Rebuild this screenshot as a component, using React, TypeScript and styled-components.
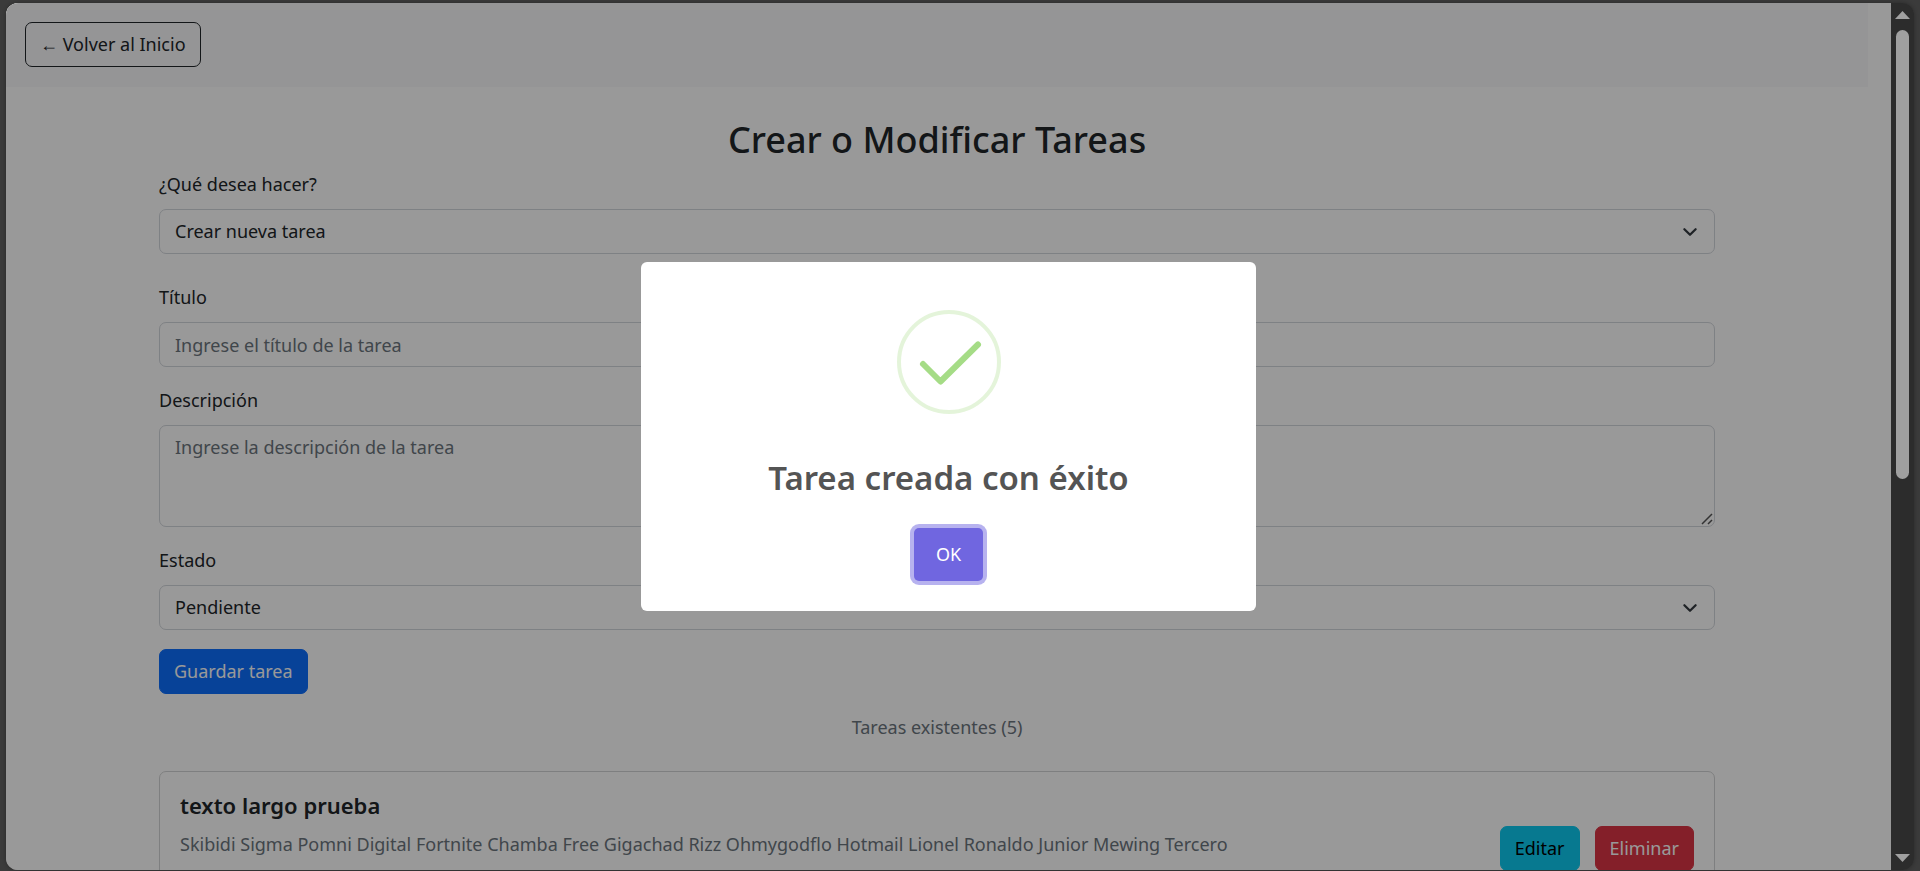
import React, { useState } from "react";
import styled, { createGlobalStyle, css } from "styled-components";

const GlobalStyle = createGlobalStyle`
  *, *::before, *::after { box-sizing: border-box; }
  body {
    margin: 0;
    background: #3b3b3b;
    color: #212529;
    font-family: "Noto Sans", "Segoe UI", sans-serif;
    font-size: 18px;
    line-height: 29px;
  }
`;

const Shell = styled.div`
  display: flex;
  height: 100vh;
  padding: 3px 6px 1px;
`;

const Frame = styled.div`
  display: flex;
  flex: 1;
  min-width: 0;
  border-radius: 12px;
  overflow: hidden;
  box-shadow: 0 0 4px rgba(0, 0, 0, 0.3);
`;

const Viewport = styled.div`
  position: relative;
  flex: 1;
  min-width: 0;
  overflow: hidden;
  background: #fff;
`;

const Page = styled.div`
  padding-right: 23px;
`;

const TopBar = styled.header`
  padding: 19px 19px 20px;
  background: #f8f9fa;
`;

const Container = styled.main`
  max-width: 1584px;
  margin: 0 auto;
  padding: 29px 14px;
`;

type Tone = "outline" | "primary" | "info" | "danger";

const tones = {
  outline: css`
    background: transparent;
    border-color: #212529;
    color: #212529;
  `,
  primary: css`
    background: #0d6efd;
    border-color: #0d6efd;
    color: #fff;
  `,
  info: css`
    background: #0dcaf0;
    border-color: #0dcaf0;
    color: #000;
  `,
  danger: css`
    background: #dc3545;
    border-color: #dc3545;
    color: #fff;
  `,
};

const Button = styled.button<{ $tone: Tone }>`
  padding: 7px 14px;
  border: 1px solid;
  border-radius: 7px;
  font: inherit;
  white-space: nowrap;
  cursor: pointer;
  ${({ $tone }) => tones[$tone]}
`;

const Heading = styled.h1`
  margin: 0 0 6px;
  font-size: 36px;
  font-weight: 500;
  line-height: 48px;
  text-align: center;
`;

const Field = styled.div<{ $spaced?: boolean }>`
  display: flex;
  flex-direction: column;
  gap: 10px;
  margin-bottom: ${({ $spaced }) => ($spaced ? 29 : 19)}px;
`;

const controlStyle = css`
  display: block;
  width: 100%;
  padding: 7px 15px;
  border: 1px solid #d3d7dc;
  border-radius: 7px;
  background: #fff;
  color: #212529;
  font: inherit;

  &::placeholder {
    color: #6c757d;
    opacity: 1;
  }
`;

const TextInput = styled.input`
  ${controlStyle}
  height: 45px;
`;

const TextArea = styled.textarea`
  ${controlStyle}
  height: 102px;
  resize: vertical;

  &::-webkit-resizer {
    background: transparent;
  }
`;

const ControlWrap = styled.div`
  position: relative;
`;

const SelectBox = styled.select`
  ${controlStyle}
  height: 45px;
  appearance: none;
`;

const Chevron = styled.svg`
  position: absolute;
  top: 50%;
  right: 16px;
  width: 18px;
  height: 18px;
  margin-top: -9px;
  pointer-events: none;
`;

const Grip = styled.svg`
  position: absolute;
  right: 2px;
  bottom: 2px;
  width: 12px;
  height: 12px;
  pointer-events: none;
`;

const ListCaption = styled.p`
  margin: 19px 0 29px;
  color: #6c757d;
  text-align: center;
`;

const TaskCard = styled.article`
  display: flex;
  align-items: center;
  justify-content: space-between;
  gap: 24px;
  min-height: 154px;
  padding: 19px 20px;
  border: 1px solid #d3d4d5;
  border-radius: 7px;
`;

const TaskText = styled.div`
  align-self: flex-start;
`;

const TaskTitle = styled.h2`
  margin: 0 0 10px;
  font-size: 22px;
  font-weight: 600;
  line-height: 29px;
`;

const TaskDescription = styled.p`
  margin: 0;
  color: #6c757d;
`;

const TaskActions = styled.div`
  display: flex;
  gap: 15px;
`;

const Backdrop = styled.div`
  position: absolute;
  inset: 0;
  display: grid;
  place-items: center;
  background: rgba(0, 0, 0, 0.4);
`;

const Dialog = styled.div`
  display: flex;
  flex-direction: column;
  align-items: center;
  width: 615px;
  max-width: 100%;
  padding: 48px 24px 30px;
  border-radius: 6px;
  background: #fff;
`;

const SuccessIcon = styled.svg`
  width: 104px;
  height: 104px;
`;

const DialogTitle = styled.h2`
  margin: 39px 0 25px;
  color: #545454;
  font-size: 33px;
  font-weight: 600;
  line-height: 50px;
`;

const ConfirmButton = styled.button`
  padding: 12px 22px;
  border: 0;
  border-radius: 5px;
  background: #7066e0;
  box-shadow: 0 0 0 4px rgba(112, 102, 224, 0.5);
  color: #fff;
  font: inherit;
  cursor: pointer;
`;

const ScrollTrack = styled.div`
  display: flex;
  flex-direction: column;
  align-items: center;
  width: 23px;
  padding: 8px 0;
  background: #2c2c2c;
`;

const ScrollArea = styled.div`
  flex: 1;
  margin: 11px 0 8px;
`;

const ScrollThumb = styled.div`
  width: 13px;
  height: 55%;
  border-radius: 7px;
  background: #a0a0a0;
`;

const Arrow = styled.svg`
  display: block;
  width: 15px;
  height: 8px;
`;

function Select({ id, options }: { id: string; options: string[] }) {
  return (
    <ControlWrap>
      <SelectBox id={id}>
        {options.map((option) => (
          <option key={option}>{option}</option>
        ))}
      </SelectBox>
      <Chevron viewBox="0 0 16 16" aria-hidden="true">
        <path d="m3 5.5 5 5 5-5" fill="none" stroke="#343a40" strokeWidth="2" strokeLinecap="round" strokeLinejoin="round" />
      </Chevron>
    </ControlWrap>
  );
}

export default function App() {
  const [open, setOpen] = useState(true);

  return (
    <>
      <GlobalStyle />
      <Shell>
        <Frame>
          <Viewport>
            <Page>
              <TopBar>
                <Button type="button" $tone="outline">← Volver al Inicio</Button>
              </TopBar>
              <Container>
                <Heading>Crear o Modificar Tareas</Heading>
                <form onSubmit={(event) => event.preventDefault()}>
                  <Field $spaced>
                    <label htmlFor="accion">¿Qué desea hacer?</label>
                    <Select id="accion" options={["Crear nueva tarea"]} />
                  </Field>
                  <Field>
                    <label htmlFor="titulo">Título</label>
                    <TextInput id="titulo" placeholder="Ingrese el título de la tarea" />
                  </Field>
                  <Field>
                    <label htmlFor="descripcion">Descripción</label>
                    <ControlWrap>
                      <TextArea id="descripcion" placeholder="Ingrese la descripción de la tarea" />
                      <Grip viewBox="0 0 12 12" aria-hidden="true">
                        <path d="M1 11 11 1M7 11l4-4" fill="none" stroke="#555" strokeWidth="1.5" />
                      </Grip>
                    </ControlWrap>
                  </Field>
                  <Field>
                    <label htmlFor="estado">Estado</label>
                    <Select id="estado" options={["Pendiente"]} />
                  </Field>
                  <Button type="submit" $tone="primary">Guardar tarea</Button>
                </form>
                <ListCaption>Tareas existentes (5)</ListCaption>
                <TaskCard>
                  <TaskText>
                    <TaskTitle>texto largo prueba</TaskTitle>
                    <TaskDescription>
                      Skibidi Sigma Pomni Digital Fortnite Chamba Free Gigachad Rizz Ohmygodflo Hotmail Lionel Ronaldo Junior Mewing Tercero
                    </TaskDescription>
                  </TaskText>
                  <TaskActions>
                    <Button type="button" $tone="info">Editar</Button>
                    <Button type="button" $tone="danger">Eliminar</Button>
                  </TaskActions>
                </TaskCard>
              </Container>
            </Page>
            {open && (
              <Backdrop>
                <Dialog role="dialog" aria-modal="true" aria-labelledby="dialog-title">
                  <SuccessIcon viewBox="0 0 104 104" fill="none" aria-hidden="true">
                    <circle cx="52" cy="52" r="50" stroke="#a5dc86" strokeOpacity="0.3" strokeWidth="4" />
                    <path d="M26 54 43.5 71.5 81 34.5" stroke="#a5dc86" strokeWidth="6" strokeLinecap="round" strokeLinejoin="round" />
                  </SuccessIcon>
                  <DialogTitle id="dialog-title">Tarea creada con éxito</DialogTitle>
                  <ConfirmButton type="button" onClick={() => setOpen(false)}>OK</ConfirmButton>
                </Dialog>
              </Backdrop>
            )}
          </Viewport>
          <ScrollTrack aria-hidden="true">
            <Arrow viewBox="0 0 15 8"><path d="M0 8 7.5 0 15 8z" fill="#a0a0a0" /></Arrow>
            <ScrollArea><ScrollThumb /></ScrollArea>
            <Arrow viewBox="0 0 15 8"><path d="M0 0 7.5 8 15 0z" fill="#a0a0a0" /></Arrow>
          </ScrollTrack>
        </Frame>
      </Shell>
    </>
  );
}
